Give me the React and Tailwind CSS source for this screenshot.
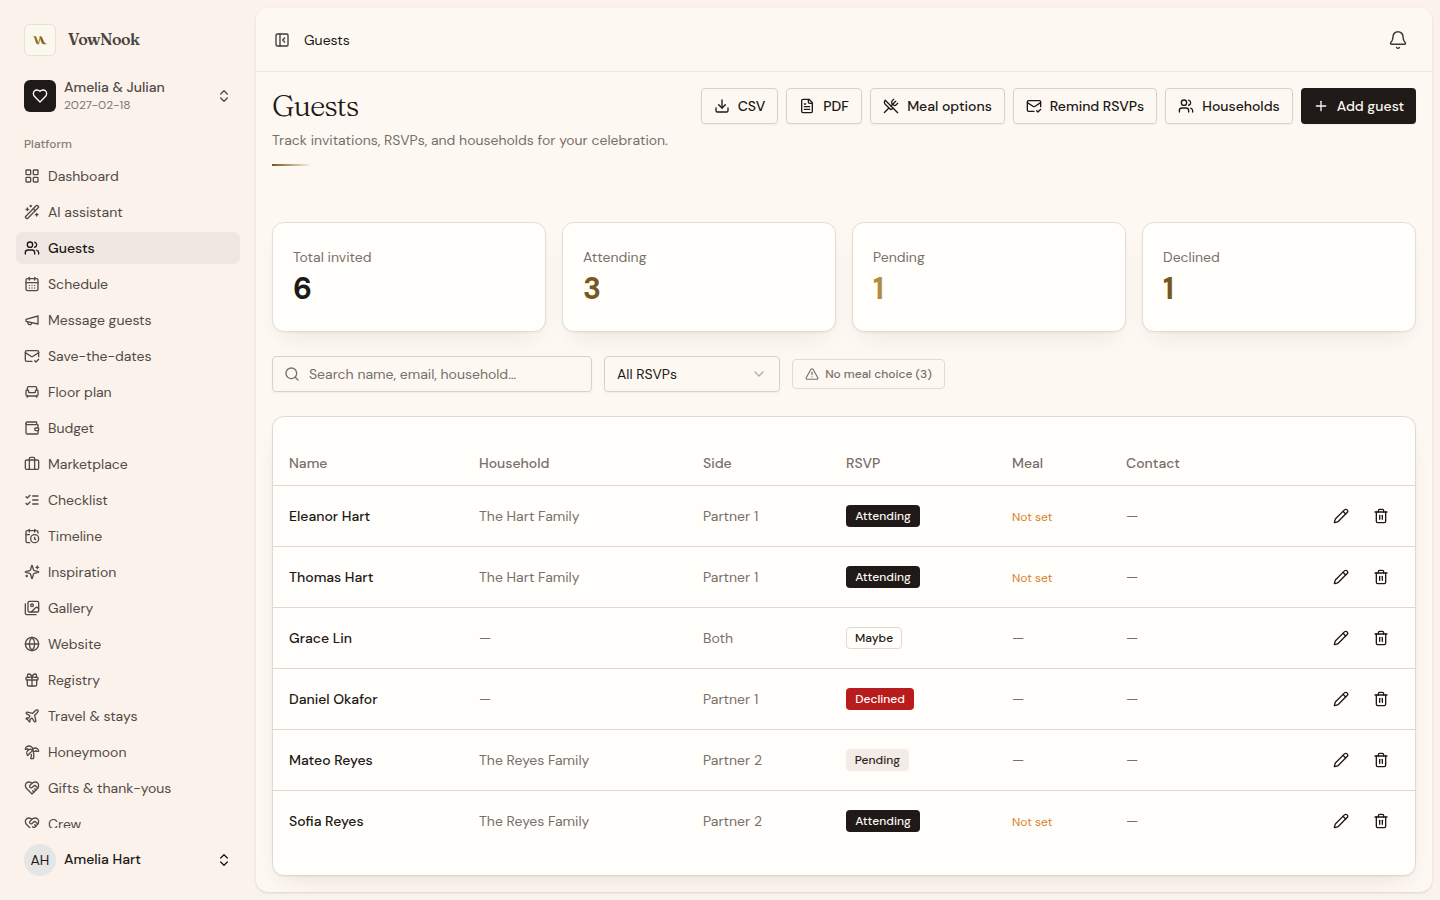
import React from "react";
import {
  Armchair,
  Bell,
  Briefcase,
  CalendarDays,
  ChevronDown,
  ChevronsUpDown,
  Download,
  Gift,
  Globe,
  LayoutGrid,
  MailCheck,
  PanelLeftClose,
  Pencil,
  Plane,
  Plus,
  Search,
  TreePalm,
  TriangleAlert,
  Users,
  UtensilsCrossed,
  WandSparkles,
} from "lucide-react";

function Icon({ className, children }) {
  return (
    <svg
      viewBox="0 0 24 24"
      fill="none"
      stroke="currentColor"
      strokeWidth="2"
      strokeLinecap="round"
      strokeLinejoin="round"
      className={className}
    >
      {children}
    </svg>
  );
}

const Megaphone = (props) => (
  <Icon {...props}>
    <path d="m3 11 18-5v12L3 14v-3z" />
    <path d="M11.6 16.8a3 3 0 1 1-5.8-1.6" />
  </Icon>
);

const Wallet = (props) => (
  <Icon {...props}>
    <path d="M19 7V4a1 1 0 0 0-1-1H5a2 2 0 0 0 0 4h15a1 1 0 0 1 1 1v4h-3a2 2 0 0 0 0 4h3a1 1 0 0 0 1-1v-2a1 1 0 0 0-1-1" />
    <path d="M3 5v14a2 2 0 0 0 2 2h15a1 1 0 0 0 1-1v-4" />
  </Icon>
);

const ListChecks = (props) => (
  <Icon {...props}>
    <path d="m3 17 2 2 4-4" />
    <path d="m3 7 2 2 4-4" />
    <path d="M13 6h8" />
    <path d="M13 12h8" />
    <path d="M13 18h8" />
  </Icon>
);

const CalendarClock = (props) => (
  <Icon {...props}>
    <path d="M21 7.5V6a2 2 0 0 0-2-2H5a2 2 0 0 0-2 2v14a2 2 0 0 0 2 2h3.5" />
    <path d="M16 2v4" />
    <path d="M8 2v4" />
    <path d="M3 10h5" />
    <path d="M17.5 17.5 16 16.3V14" />
    <circle cx="16" cy="16" r="6" />
  </Icon>
);

const Sparkles = (props) => (
  <Icon {...props}>
    <path d="M9.937 15.5A2 2 0 0 0 8.5 14.063l-6.135-1.582a.5.5 0 0 1 0-.962L8.5 9.936A2 2 0 0 0 9.937 8.5l1.582-6.135a.5.5 0 0 1 .963 0L14.063 8.5A2 2 0 0 0 15.5 9.937l6.135 1.581a.5.5 0 0 1 0 .964L15.5 14.063a2 2 0 0 0-1.437 1.437l-1.582 6.135a.5.5 0 0 1-.963 0z" />
    <path d="M20 3v4" />
    <path d="M22 5h-4" />
    <path d="M4 17v2" />
    <path d="M5 18H3" />
  </Icon>
);

const Images = (props) => (
  <Icon {...props}>
    <path d="M18 22H4a2 2 0 0 1-2-2V6" />
    <path d="m22 13-1.296-1.296a2.41 2.41 0 0 0-3.408 0L11 18" />
    <circle cx="12" cy="8" r="2" />
    <rect width="16" height="16" x="6" y="2" rx="2" />
  </Icon>
);

const Heart = (props) => (
  <Icon {...props}>
    <path d="M19 14c1.49-1.46 3-3.21 3-5.5A5.5 5.5 0 0 0 16.5 3c-1.76 0-3 .5-4.5 2-1.5-1.5-2.74-2-4.5-2A5.5 5.5 0 0 0 2 8.5c0 2.3 1.5 4.05 3 5.5l7 7Z" />
  </Icon>
);

const HeartHandshake = (props) => (
  <Icon {...props}>
    <path d="M19 14c1.49-1.46 3-3.21 3-5.5A5.5 5.5 0 0 0 16.5 3c-1.76 0-3 .5-4.5 2-1.5-1.5-2.74-2-4.5-2A5.5 5.5 0 0 0 2 8.5c0 2.3 1.5 4.05 3 5.5l7 7Z" />
    <path d="M12 5 9.04 7.96a2.17 2.17 0 0 0 0 3.08c.82.82 2.13.85 3 .07l2.07-1.9a2.82 2.82 0 0 1 3.79 0l2.96 2.66" />
    <path d="m18 15-2-2" />
    <path d="m15 18-2-2" />
  </Icon>
);

const FileText = (props) => (
  <Icon {...props}>
    <path d="M15 2H6a2 2 0 0 0-2 2v16a2 2 0 0 0 2 2h12a2 2 0 0 0 2-2V7Z" />
    <path d="M14 2v4a2 2 0 0 0 2 2h4" />
    <path d="M10 9H8" />
    <path d="M16 13H8" />
    <path d="M16 17H8" />
  </Icon>
);

const Trash = (props) => (
  <Icon {...props}>
    <path d="M3 6h18" />
    <path d="M19 6v14c0 1-1 2-2 2H7c-1 0-2-1-2-2V6" />
    <path d="M8 6V4c0-1 1-2 2-2h4c1 0 2 1 2 2v2" />
    <path d="M10 11v6" />
    <path d="M14 11v6" />
  </Icon>
);

function Logo() {
  return (
    <div className="flex size-8 items-center justify-center rounded-md border border-[#e9e1d8] bg-[#fbf8ee]">
      <svg viewBox="0 0 14 9" className="h-[9px] w-3.5">
        <path d="M0 .3h3l3.200 8H4.800Q3.300 8 2.600 5.900L1.600 2.600Q1.200 1 0 .3Z" fill="#94732a" />
        <path d="M4.900 8.300 6.800.6h1.100L6 8.300Z" fill="#a88a45" />
        <path d="M6.500.5h2.200l2.400 5.600q.8 1.700 2.900 1.900-2.900.8-4.500-.3Q8.700 7.200 8.200 6Z" fill="#86661f" />
      </svg>
    </div>
  );
}

const navItems = [
  { title: "Dashboard", icon: LayoutGrid },
  { title: "AI assistant", icon: WandSparkles },
  { title: "Guests", icon: Users, active: true },
  { title: "Schedule", icon: CalendarDays },
  { title: "Message guests", icon: Megaphone },
  { title: "Save-the-dates", icon: MailCheck },
  { title: "Floor plan", icon: Armchair },
  { title: "Budget", icon: Wallet },
  { title: "Marketplace", icon: Briefcase },
  { title: "Checklist", icon: ListChecks },
  { title: "Timeline", icon: CalendarClock },
  { title: "Inspiration", icon: Sparkles },
  { title: "Gallery", icon: Images },
  { title: "Website", icon: Globe },
  { title: "Registry", icon: Gift },
  { title: "Travel & stays", icon: Plane },
  { title: "Honeymoon", icon: TreePalm },
  { title: "Gifts & thank-yous", icon: HeartHandshake },
  { title: "Crew", icon: HeartHandshake },
];

const stats = [
  { label: "Total invited", value: 6, color: "text-[#1c1917]" },
  { label: "Attending", value: 3, color: "text-[#76591b]" },
  { label: "Pending", value: 1, color: "text-[#b08d42]" },
  { label: "Declined", value: 1, color: "text-[#76591b]" },
];

const guests = [
  { name: "Eleanor Hart", household: "The Hart Family", side: "Partner 1", rsvp: "Attending", noMeal: true },
  { name: "Thomas Hart", household: "The Hart Family", side: "Partner 1", rsvp: "Attending", noMeal: true },
  { name: "Grace Lin", household: "—", side: "Both", rsvp: "Maybe" },
  { name: "Daniel Okafor", household: "—", side: "Partner 1", rsvp: "Declined" },
  { name: "Mateo Reyes", household: "The Reyes Family", side: "Partner 2", rsvp: "Pending" },
  { name: "Sofia Reyes", household: "The Reyes Family", side: "Partner 2", rsvp: "Attending", noMeal: true },
];

const badgeStyles = {
  Attending: "w-[74px] border-transparent bg-[#1f1a17] text-[#fdf8f3]",
  Maybe: "w-14 border-[#dedad3] text-[#1c1917]",
  Declined: "w-[68px] border-transparent bg-[#b91c1c] text-white",
  Pending: "w-[63px] border-transparent bg-[#f4ebe7] text-[#2b2521]",
};

function Sidebar() {
  return (
    <aside className="flex w-64 shrink-0 flex-col px-4 text-[#514a45]">
      <div className="mt-4 flex h-12 items-center gap-3 px-2">
        <Logo />
        <span className="pb-0.5 font-['Fraunces','Liberation_Serif',serif] text-base font-semibold tracking-[-0.5px] text-[#4a443f]">
          VowNook
        </span>
      </div>
      <div className="mt-2 flex h-12 items-center gap-2 px-2">
        <div className="flex size-8 items-center justify-center rounded-md bg-[#1f1a17] text-white">
          <Heart className="size-4" />
        </div>
        <div className="flex-1">
          <div className="text-sm leading-[17.5px] font-medium">Amelia &amp; Julian</div>
          <div className="text-xs leading-4 text-[#7d7570]">2027-02-18</div>
        </div>
        <ChevronsUpDown className="size-4" />
      </div>
      <div className="mt-2 flex h-8 items-center px-2 text-xs font-medium text-[#847c77]">Platform</div>
      <nav className="flex h-[668px] flex-col gap-1 overflow-hidden">
        {navItems.map(({ title, icon: NavIcon, active }) => (
          <a
            key={title}
            className={
              active
                ? "flex h-8 shrink-0 items-center gap-2 rounded-md bg-[#efe7e2] px-2 text-sm font-medium text-[#1c1917]"
                : "flex h-8 shrink-0 items-center gap-2 rounded-md px-2 text-sm"
            }
          >
            <NavIcon className="size-4" />
            <span>{title}</span>
          </a>
        ))}
      </nav>
      <div className="mt-2 flex h-12 items-center gap-2 px-2 text-[#1c1917]">
        <div className="flex size-8 items-center justify-center rounded-full bg-[#e5e5e5] text-sm">AH</div>
        <span className="flex-1 pb-0.5 text-sm font-medium">Amelia Hart</span>
        <ChevronsUpDown className="size-4" />
      </div>
    </aside>
  );
}

function ActionButton({ icon: ButtonIcon, label, className }) {
  return (
    <button
      className={`flex h-9 items-center justify-center gap-2 rounded border border-[#d9d2cb] text-sm font-medium whitespace-nowrap text-[#1c1917] shadow-xs ${className}`}
    >
      <ButtonIcon className="size-4 shrink-0" />
      {label}
    </button>
  );
}

function StatCard({ label, value, color }) {
  return (
    <div className="h-[110px] rounded-xl border border-[#e2ded7] bg-[#fffefb] px-5 pt-6 shadow-[0_1px_2px_rgba(60,40,30,0.05),0_12px_24px_-12px_rgba(60,40,30,0.12)]">
      <div className="text-sm text-[#77706a]">{label}</div>
      <div className={`mt-1 text-[30px] leading-9 font-bold ${color}`}>{value}</div>
    </div>
  );
}

function GuestTable() {
  return (
    <div className="mt-6 h-[460px] rounded-xl border border-[#dedad3] bg-[#fffefb] pt-6 shadow-[0_1px_2px_rgba(60,40,30,0.06),0_12px_24px_-12px_rgba(60,40,30,0.14)]">
      <table className="w-full table-fixed text-left text-sm text-[#77706a]">
        <colgroup>
          <col className="w-[190px]" />
          <col className="w-56" />
          <col className="w-[143px]" />
          <col className="w-[166px]" />
          <col className="w-[114px]" />
          <col />
          <col className="w-[108px]" />
        </colgroup>
        <thead>
          <tr className="h-11 border-b border-[#dedad3]">
            {["Name", "Household", "Side", "RSVP", "Meal", "Contact", ""].map((heading) => (
              <th key={heading} className="px-4 pt-px font-medium">
                {heading}
              </th>
            ))}
          </tr>
        </thead>
        <tbody>
          {guests.map((guest) => (
            <tr key={guest.name} className="h-[61px] border-b border-[#dedad3] last:border-b-0">
              <td className="px-4 font-medium text-[#1c1917]">{guest.name}</td>
              <td className="px-4">{guest.household}</td>
              <td className="px-4">{guest.side}</td>
              <td className="px-4">
                <span
                  className={`flex h-[22px] items-center justify-center rounded border text-xs font-medium ${badgeStyles[guest.rsvp]}`}
                >
                  {guest.rsvp}
                </span>
              </td>
              <td className="px-4">
                {guest.noMeal ? <span className="text-xs text-[#d97d1e]">Not set</span> : "—"}
              </td>
              <td className="px-4">—</td>
              <td className="pr-4">
                <div className="flex justify-end gap-1 text-[#1c1917]">
                  <button className="flex size-9 items-center justify-center" aria-label="Edit guest">
                    <Pencil className="size-4" />
                  </button>
                  <button className="flex size-9 items-center justify-center" aria-label="Delete guest">
                    <Trash className="size-4" />
                  </button>
                </div>
              </td>
            </tr>
          ))}
        </tbody>
      </table>
    </div>
  );
}

export default function App() {
  return (
    <div className="flex h-[900px] w-[1440px] overflow-hidden bg-[#fbf2ec] font-['DM_Sans','Inter',sans-serif]">
      <Sidebar />
      <main className="my-2 mr-2 flex-1 overflow-hidden rounded-xl bg-[#fef8f2] shadow-sm">
        <header className="flex h-16 items-center justify-between border-b border-[#eee7e0] px-4 text-[#1c1917]">
          <div className="flex items-center">
            <PanelLeftClose className="ml-0.5 size-4 text-[#3f3a36]" />
            <span className="ml-3.5 text-sm">Guests</span>
          </div>
          <Bell className="mr-2 size-5 text-[#3f3a36]" strokeWidth={1.75} />
        </header>
        <div className="p-4">
          <div className="flex h-[110px] items-start justify-between">
            <div>
              <h1 className="font-['Fraunces','Liberation_Serif',serif] text-[30px] leading-9 font-light tracking-[-1.1px] text-[#1c1917]">
                Guests
              </h1>
              <p className="mt-1.5 text-sm text-[#77706a]">
                Track invitations, RSVPs, and households for your celebration.
              </p>
              <div className="mt-3.5 h-0.5 w-10 bg-linear-to-r from-[#76591b] to-transparent" />
            </div>
            <div className="flex gap-2">
              <ActionButton icon={Download} label="CSV" className="w-[77px]" />
              <ActionButton icon={FileText} label="PDF" className="w-[76px]" />
              <ActionButton icon={UtensilsCrossed} label="Meal options" className="w-[135px]" />
              <ActionButton icon={MailCheck} label="Remind RSVPs" className="w-36" />
              <ActionButton icon={Users} label="Households" className="w-32" />
              <button className="flex h-9 w-[115px] items-center justify-center gap-2 rounded bg-[#1f1a17] text-sm font-medium whitespace-nowrap text-[#fdf8f3] shadow-xs">
                <Plus className="size-4 shrink-0" />
                Add guest
              </button>
            </div>
          </div>
          <div className="mt-6 grid grid-cols-4 gap-4">
            {stats.map((stat) => (
              <StatCard key={stat.label} {...stat} />
            ))}
          </div>
          <div className="mt-6 flex items-center gap-3">
            <div className="flex h-9 w-80 items-center rounded border border-[#d9d2cb] pl-[11px] text-sm text-[#77706a] shadow-xs">
              <Search className="mr-[9px] size-4" />
              Search name, email, household…
            </div>
            <div className="flex h-9 w-44 items-center justify-between rounded border border-[#d9d2cb] px-3 text-sm text-[#1c1917] shadow-xs">
              All RSVPs
              <ChevronDown className="size-4 text-[#b5aea8]" />
            </div>
            <div className="flex h-[30px] w-[153px] items-center justify-center gap-1.5 rounded border border-[#e2dbd5] text-xs font-medium whitespace-nowrap text-[#77706a]">
              <TriangleAlert className="size-3.5" />
              No meal choice (3)
            </div>
          </div>
          <GuestTable />
        </div>
      </main>
    </div>
  );
}
